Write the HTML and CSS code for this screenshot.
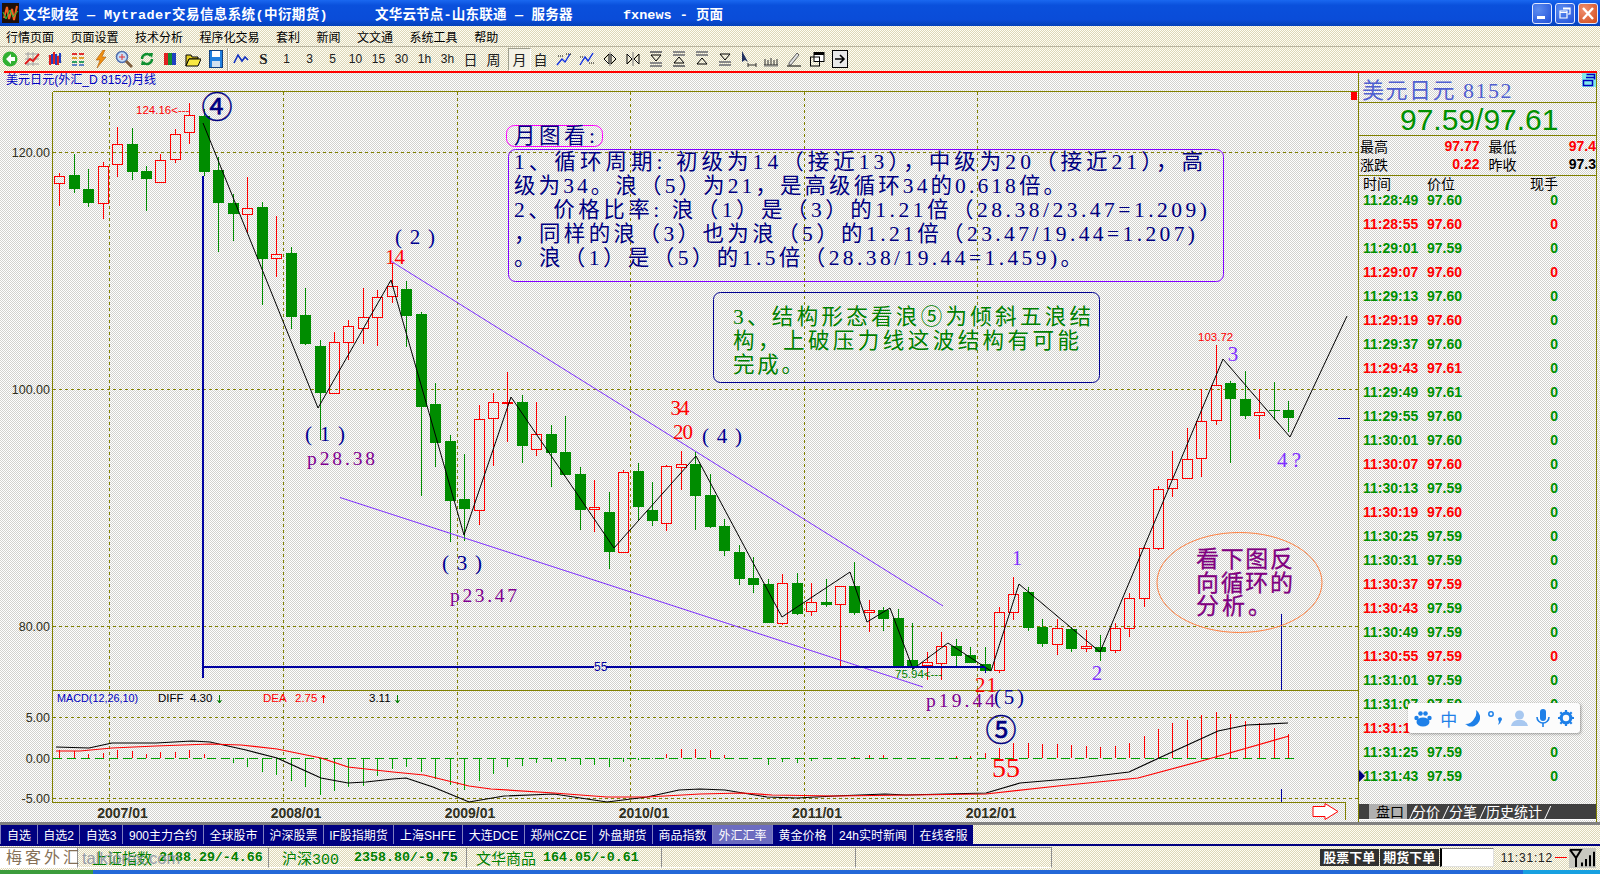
FILE: index.html
```html
<!DOCTYPE html>
<html>
<head>
  <meta charset="utf-8">
  <title>文华财经 Mytrader</title>
  <link rel="stylesheet" href="styles.css">
</head>
<body>
  <div class="window">
    <div class="titlebar">
      <svg class="app-icon" width="17" height="20" viewBox="0 0 17 20"><rect width="17" height="20" fill="#201008"/><path d="M2 15 5 4 7 16 10 6 12 17 15 3" fill="none" stroke="#f06020" stroke-width="2"/><path d="M1 9 4 16 8 7 11 14 16 8" fill="none" stroke="#20c040" stroke-width="1"/></svg>
      <span class="title-a">文华财经 — Mytrader交易信息系统(中衍期货)</span>
      <span class="title-b">文华云节点-山东联通 — 服务器</span>
      <span class="title-c">fxnews - 页面</span>
      <div class="winbtns">
        <div class="winbtn"><svg width="20" height="21" viewBox="0 0 20 21"><rect x="5" y="13" width="8" height="3" fill="#fff"/></svg></div>
        <div class="winbtn"><svg width="20" height="21" viewBox="0 0 20 21"><path d="M8 5h7v6h-2M5 8h7v7H5zM5 9.5h7M8 6h7" fill="none" stroke="#fff" stroke-width="1.2"/></svg></div>
        <div class="winbtn close"><svg width="20" height="21" viewBox="0 0 20 21"><path d="M5 5 15 16M15 5 5 16" stroke="#fff" stroke-width="2.4"/></svg></div>
      </div>
    </div>

    <div class="menubar">
      <span>行情页面</span><span>页面设置</span><span>技术分析</span><span>程序化交易</span><span>套利</span><span>新闻</span><span>文文通</span><span>系统工具</span><span>帮助</span>
    </div>

    <div class="toolbar">
      <div class="tb first"><svg width="16" height="16" viewBox="0 0 16 16"><circle cx="8" cy="8" r="7.5" fill="#30b030"/><path d="M9 3 4 8l5 5V10h4V6H9z" fill="#fff"/></svg></div>
      <div class="tb"><svg width="16" height="16" viewBox="0 0 16 16"><path d="M1 3h14M1 8h14M1 13h14M4 1v14M9 1v14" stroke="#a0a0a0"/><path d="M1 13 6 8l3 2 6-7" fill="none" stroke="#e02020" stroke-width="2"/></svg></div>
      <div class="tb"><svg width="16" height="16" viewBox="0 0 16 16"><path d="M1 5h14M1 11h14" stroke="#a0a0a0"/><path d="M3 4v10M7 1v12M11 5v9" stroke="#e02020" stroke-width="2"/><path d="M5 3v10M9 3v11M13 2v10" stroke="#2040c0" stroke-width="2"/></svg></div>
      <div class="tb"><svg width="16" height="16" viewBox="0 0 16 16"><path d="M2 3h5M9 3h5" stroke="#e03030" stroke-width="2"/><path d="M2 7h5M9 7h5" stroke="#e0a030" stroke-width="2"/><path d="M2 11h5M9 11h5" stroke="#30a060" stroke-width="2"/><path d="M2 14h5M9 14h5" stroke="#3060c0" stroke-width="1.4"/></svg></div>
      <div class="tb"><svg width="16" height="18" viewBox="0 0 16 18"><path d="M10 0 3 10h4l-3 8 9-11H9l3-7z" fill="#f09010" stroke="#a05000" stroke-width=".5"/></svg></div>
      <div class="tb"><svg width="18" height="18" viewBox="0 0 18 18"><circle cx="7" cy="7" r="5.5" fill="#c8e0f8" stroke="#5070b0" stroke-width="1.5"/><path d="M7 4v6M4 7h6" stroke="#e03030"/><path d="m11 11 6 6" stroke="#806040" stroke-width="3"/></svg></div>
      <div class="tb"><svg width="14" height="16" viewBox="0 0 14 16"><path d="M2 8a5 5 0 0 1 9-3M12 8a5 5 0 0 1-9 3" fill="none" stroke="#109030" stroke-width="2.4"/><path d="m9 2 4 0-1 5zM5 14l-4 0 1-5z" fill="#109030"/></svg></div>
      <div class="tb"><svg width="12" height="12" viewBox="0 0 12 12"><rect width="4" height="12" fill="#e02020"/><rect x="4" width="4" height="12" fill="#109030"/><rect x="8" width="4" height="12" fill="#2040c0"/></svg></div>
      <div class="tb"><svg width="16" height="15" viewBox="0 0 16 15"><path d="M1 3h5l1 2h6v2H4L1 14z" fill="#e8d020" stroke="#000"/><path d="M4 7h12l-3 7H1z" fill="#f8e840" stroke="#000"/></svg></div>
      <div class="tb"><svg width="14" height="18" viewBox="0 0 14 18"><rect x=".5" y=".5" width="13" height="17" fill="#2080e0" stroke="#104080"/><rect x="3" y="1" width="8" height="6" fill="#fff"/><rect x="3" y="11" width="8" height="6" fill="#d0e0f0"/></svg></div>
      <div class="tb-sep"></div>
      <div class="tb"><svg width="16" height="12" viewBox="0 0 16 12"><path d="m1 10 4-8 4 6 3-4 3 3" fill="none" stroke="#1030c0" stroke-width="1.6"/></svg></div>
      <div class="tb bold-s">S</div>
      <div class="tb">1</div><div class="tb">3</div><div class="tb">5</div><div class="tb">10</div><div class="tb">15</div><div class="tb">30</div><div class="tb">1h</div><div class="tb">3h</div>
      <div class="tb cjk">日</div><div class="tb cjk">周</div>
      <div class="tb cjk active">月</div><div class="tb cjk">自</div>
      <div class="tb"><svg width="16" height="16" viewBox="0 0 16 16"><path d="m1 14 5-6 3 3 5-8" fill="none" stroke="#1030e0" stroke-width="1.4"/><path d="M10 3h5M2 5h5" stroke="#000" stroke-dasharray="1 1"/></svg></div>
      <div class="tb"><svg width="16" height="16" viewBox="0 0 16 16"><path d="m1 14 5-8 3 4 5-8" fill="none" stroke="#1030e0" stroke-width="1.4"/><path d="M1 6h4M10 12h5" stroke="#000" stroke-dasharray="1 1"/></svg></div>
      <div class="tb"><svg width="14" height="14" viewBox="0 0 14 14"><path d="M6 2 1 7l5 5zM8 2l5 5-5 5z" fill="none" stroke="#000"/><path d="M7 0v14" stroke="#777"/></svg></div>
      <div class="tb"><svg width="14" height="14" viewBox="0 0 14 14"><path d="m1 2 5 5-5 5zM13 2 8 7l5 5z" fill="none" stroke="#000"/><path d="M7 0v14" stroke="#777"/></svg></div>
      <div class="tb"><svg width="16" height="16" viewBox="0 0 16 16"><path d="M2 1h12" stroke="#777" stroke-width="2"/><path d="M3 4h10l-5 6z" fill="none" stroke="#000"/><path d="M2 12h12M2 15h12" stroke="#888" stroke-width="2"/></svg></div>
      <div class="tb"><svg width="16" height="16" viewBox="0 0 16 16"><path d="M2 1h12M2 4h12" stroke="#888" stroke-width="2"/><path d="M3 12h10L8 6z" fill="none" stroke="#000"/><path d="M2 15h12" stroke="#777" stroke-width="2"/></svg></div>
      <div class="tb"><svg width="16" height="16" viewBox="0 0 16 16"><path d="M2 1h12M2 4h12" stroke="#888" stroke-width="2"/><path d="M3 13h10L8 7z" fill="none" stroke="#000"/></svg></div>
      <div class="tb"><svg width="16" height="16" viewBox="0 0 16 16"><path d="M3 3h10l-5 6z" fill="none" stroke="#000"/><path d="M2 11h12M2 14h12" stroke="#888" stroke-width="2"/></svg></div>
      <div class="tb"><svg width="18" height="18" viewBox="0 0 18 18"><path d="M3 1v11l3-2 3 2z" fill="#203060"/><path d="M9 15h8M9 13v4M17 13v4" stroke="#303030"/></svg></div>
      <div class="tb"><svg width="16" height="16" viewBox="0 0 16 16"><path d="M1 14h14M2 14V8M5 14V9M8 14V7M11 14V9M14 14V8" stroke="#303030"/><path d="M1 15h14" stroke="#808080"/></svg></div>
      <div class="tb"><svg width="16" height="16" viewBox="0 0 16 16"><path d="m3 12 8-10 2 2-8 10H3z" fill="#e0e0e0" stroke="#606060"/><path d="M1 15h14" stroke="#000"/></svg></div>
      <div class="tb"><svg width="16" height="16" viewBox="0 0 16 16"><rect x="5" y="1.500" width="10" height="9" fill="#fff" stroke="#000"/><rect x="1.500" y="6" width="9" height="9" fill="none" stroke="#000"/><path d="M5 3h10" stroke="#000" stroke-width="2"/></svg></div>
      <div class="tb"><svg width="16" height="18" viewBox="0 0 16 18"><rect x=".5" y=".5" width="15" height="17" fill="#e8e8e8" stroke="#000"/><path d="M3 9h8M8 5l4 4-4 4" fill="none" stroke="#000" stroke-width="1.6"/></svg></div>
    </div>

    <div class="redline"></div>

    <div class="main">
      <div class="chart">
        <svg class="chart-svg" width="1358" height="749" viewBox="0 73 1358 749">
          <text class="caption" x="6" y="83.500" textLength="150" lengthAdjust="spacingAndGlyphs">美元日元(外汇_D 8152)月线</text>

          <g class="grid">
            <path d="M53 152.500H1358M53 389.500H1358M53 626.500H1358M53 717.500H1358M53 798.500H1358"/>
            <path d="M109.500 92V802M283.500 92V802M457.500 92V802M630.500 92V802M804.500 92V802M977.500 92V802"/>
          </g>
          <g class="axis">
            <path d="M52.500 91.500H1358M52.500 91.500V802.500H1345M52 690.500H1358M1345.500 802V820"/>
          </g>
          <rect x="1351" y="92" width="6" height="8" fill="#ff0000"/>

          <g class="ylabels">
            <text x="50" y="157">120.00</text>
            <text x="50" y="394">100.00</text>
            <text x="50" y="631">80.00</text>
            <text x="50" y="722">5.00</text>
            <text x="50" y="763">0.00</text>
            <text x="50" y="803">-5.00</text>
          </g>

          <g id="histogram"></g>
          <path class="zero-green" d="M53 758.500H1296"/>
          <g id="candles"></g>

          <!-- 波浪连线 -->
          <polyline class="zigzag" points="203,123 318,408 391,280 464,535 511,397 614,548 696,456 782,617 850,572 867,622 890,608 913,669 948,643 991,671 1019,584 1100,652 1223,359 1290,437 1347,316"/>
          <path class="trend" d="M390 260.500 943 606M340 497.500 923 687"/>
          <path class="wave-blue" d="M203 176V678M203 667H594M606 667H985"/>
          <path class="thin-blue" d="M1281.500 614V690M1281.500 789V802M1338 418.500H1350M985.500 667V673"/>
          <polyline id="diff" class="line-black" points=""/>
          <polyline id="dea" class="line-red" points=""/>

          <!-- MACD 标题 -->
          <text class="macd-t blue" x="57" y="702" textLength="81" lengthAdjust="spacingAndGlyphs">MACD(12,26,10)</text>
          <text class="macd-t black" x="158" y="702">DIFF</text>
          <text class="macd-t black" x="190" y="702">4.30</text>
          <path d="M219.500 695v8m-2-3 2 3 2-3" fill="none" stroke="#008000"/>
          <text class="macd-t red" x="263" y="702">DEA</text>
          <text class="macd-t red" x="295" y="702">2.75</text>
          <path d="M323.500 703v-8m-2 3 2-3 2 3" fill="none" stroke="#ff0000"/>
          <text class="macd-t black" x="369" y="702">3.11</text>
          <path d="M397.500 695v8m-2-3 2 3 2-3" fill="none" stroke="#008000"/>

          <!-- 时间轴 -->
          <g class="dates">
            <text x="122.500" y="818">2007/01</text>
            <text x="296" y="818">2008/01</text>
            <text x="470" y="818">2009/01</text>
            <text x="644" y="818">2010/01</text>
            <text x="817" y="818">2011/01</text>
            <text x="991" y="818">2012/01</text>
          </g>
          <path class="next-arrow" d="M1313 806.500h12v-3l13 8-13 8v-3h-12z"/>

          <!-- 价格标注 -->
          <text class="price-note red" x="136" y="114">124.16&lt;---</text>
          <text class="price-note red" x="1198" y="341">103.72</text>
          <text class="price-note green" x="895" y="678">75.94&lt;---</text>
          <text class="big-55" x="594" y="671" id="n55">55</text>

          <!-- 标注文字 -->
          <text class="circled" x="217" y="118">④</text>
          <text class="circled" x="1001" y="741">⑤</text>
          <g class="wave-no navy">
            <text x="415" y="244" textLength="40">( 2 )</text>
            <text x="325" y="441" textLength="40">( 1 )</text>
            <text x="462" y="570" textLength="40">( 3 )</text>
            <text x="722" y="443" textLength="40">( 4 )</text>
            <text x="1009" y="704" textLength="30">( 5 )</text>
          </g>
          <g class="wave-no red">
            <text x="395" y="264" textLength="20">14</text>
            <text x="680" y="415" textLength="19">34</text>
            <text x="683" y="439" textLength="20">20</text>
            <text x="986" y="692" textLength="22">21</text>
          </g>
          <g class="wave-no violet">
            <text x="1017" y="565">1</text>
            <text x="1097" y="680">2</text>
            <text x="1233" y="361">3</text>
            <text x="1289" y="467" textLength="24">4?</text>
          </g>
          <g class="p-note">
            <text x="307" y="465" textLength="68">p28.38</text>
            <text x="450" y="602" textLength="67">p23.47</text>
            <text x="926" y="707" textLength="69">p19.44</text>
          </g>
          <text class="big-red" x="992" y="777" textLength="28">55</text>

          <rect class="box-month" x="506.500" y="125.500" width="96" height="21" rx="8"/>
          <text class="note navy" x="514" y="143" textLength="81">月图看:</text>

          <rect class="box-main" x="508.500" y="149.500" width="715" height="132" rx="7"/>
          <g class="note navy">
            <text x="514" y="169" textLength="689">1、循环周期: 初级为14（接近13），中级为20（接近21），高</text>
            <text x="514" y="193" textLength="551">级为34。浪（5）为21，是高级循环34的0.618倍。</text>
            <text x="514" y="216.500" textLength="693">2、价格比率: 浪（1）是（3）的1.21倍（28.38/23.47=1.209)</text>
            <text x="514" y="241" textLength="681">，同样的浪（3）也为浪（5）的1.21倍（23.47/19.44=1.207)</text>
            <text x="514" y="265" textLength="568">。浪（1）是（5）的1.5倍（28.38/19.44=1.459)。</text>
          </g>

          <rect class="box-green" x="713.500" y="292.500" width="386" height="90" rx="7"/>
          <g class="note green">
            <text x="733" y="324" textLength="358">3、结构形态看浪⑤为倾斜五浪结</text>
            <text x="733" y="348" textLength="346">构，上破压力线这波结构有可能</text>
            <text x="733" y="372" textLength="70">完成。</text>
          </g>

          <ellipse class="oval" cx="1239.500" cy="582.500" rx="82.500" ry="50"/>
          <g class="note purple">
            <text x="1196" y="567" textLength="97">看下图反</text>
            <text x="1196" y="591" textLength="97">向循环的</text>
            <text x="1196" y="614" textLength="75">分析。</text>
          </g>
        </svg>
      </div>

      <div class="side">
        <div class="side-head">
          <span class="symbol">美元日元 8152</span>
          <svg class="layout-icon" width="14" height="14" viewBox="0 0 14 14"><rect width="14" height="14" fill="#80e8e8"/><path d="M4.500 1.500h8v5M1.500 7.500h9v5h-9zM4 4.500h8" fill="none" stroke="#0000c0" stroke-width="1.500"/></svg>
        </div>
        <div class="side-price">97.59/97.61</div>
        <div class="side-stats">
          <div class="stat-row"><span class="s-label">最高</span><span class="s-val up">97.77</span><span class="s-label2">最低</span><span class="s-val2 up">97.4</span></div>
          <div class="stat-row"><span class="s-label">涨跌</span><span class="s-val up">0.22</span><span class="s-label2">昨收</span><span class="s-val2">97.3</span></div>
        </div>
        <div class="tick-head"><span class="c-time">时间</span><span class="c-price">价位</span><span class="c-qty">现手</span></div>
        <div class="ticks">
          <div class="tick dn"><span class="c-time">11:28:49</span><span class="c-price">97.60</span><span class="c-qty">0</span></div>
          <div class="tick up"><span class="c-time">11:28:55</span><span class="c-price">97.60</span><span class="c-qty">0</span></div>
          <div class="tick dn"><span class="c-time">11:29:01</span><span class="c-price">97.59</span><span class="c-qty">0</span></div>
          <div class="tick up"><span class="c-time">11:29:07</span><span class="c-price">97.60</span><span class="c-qty">0</span></div>
          <div class="tick dn"><span class="c-time">11:29:13</span><span class="c-price">97.60</span><span class="c-qty">0</span></div>
          <div class="tick up"><span class="c-time">11:29:19</span><span class="c-price">97.60</span><span class="c-qty dn">0</span></div>
          <div class="tick dn"><span class="c-time">11:29:37</span><span class="c-price">97.60</span><span class="c-qty">0</span></div>
          <div class="tick up"><span class="c-time">11:29:43</span><span class="c-price">97.61</span><span class="c-qty dn">0</span></div>
          <div class="tick dn"><span class="c-time">11:29:49</span><span class="c-price">97.61</span><span class="c-qty">0</span></div>
          <div class="tick dn"><span class="c-time">11:29:55</span><span class="c-price">97.60</span><span class="c-qty">0</span></div>
          <div class="tick dn"><span class="c-time">11:30:01</span><span class="c-price">97.60</span><span class="c-qty">0</span></div>
          <div class="tick up"><span class="c-time">11:30:07</span><span class="c-price">97.60</span><span class="c-qty dn">0</span></div>
          <div class="tick dn"><span class="c-time">11:30:13</span><span class="c-price">97.59</span><span class="c-qty">0</span></div>
          <div class="tick up"><span class="c-time">11:30:19</span><span class="c-price">97.60</span><span class="c-qty dn">0</span></div>
          <div class="tick dn"><span class="c-time">11:30:25</span><span class="c-price">97.59</span><span class="c-qty">0</span></div>
          <div class="tick dn"><span class="c-time">11:30:31</span><span class="c-price">97.59</span><span class="c-qty">0</span></div>
          <div class="tick up"><span class="c-time">11:30:37</span><span class="c-price">97.59</span><span class="c-qty dn">0</span></div>
          <div class="tick up"><span class="c-time">11:30:43</span><span class="c-price dn">97.59</span><span class="c-qty dn">0</span></div>
          <div class="tick dn"><span class="c-time">11:30:49</span><span class="c-price">97.59</span><span class="c-qty">0</span></div>
          <div class="tick up"><span class="c-time">11:30:55</span><span class="c-price">97.59</span><span class="c-qty">0</span></div>
          <div class="tick dn"><span class="c-time">11:31:01</span><span class="c-price">97.59</span><span class="c-qty">0</span></div>
          <div class="tick dn"><span class="c-time">11:31:07</span><span class="c-price">97.59</span><span class="c-qty">0</span></div>
          <div class="tick up"><span class="c-time">11:31:19</span><span class="c-price">97.59</span><span class="c-qty">0</span></div>
          <div class="tick dn"><span class="c-time">11:31:25</span><span class="c-price">97.59</span><span class="c-qty">0</span></div>
          <div class="tick dn"><span class="c-time">11:31:43</span><span class="c-price">97.59</span><span class="c-qty">0</span></div>
        </div>
        <div class="side-tabs">
          <span class="st-active">盘口</span><span>分价</span><span>分笔</span><span>历史统计</span>
        </div>
        <div class="cur-mark"></div>
        <div class="ime">
          <svg width="18" height="17" viewBox="0 0 18 17"><ellipse cx="9" cy="12" rx="6.500" ry="4.500"/><circle cx="2.500" cy="8" r="2.200"/><circle cx="6.500" cy="3.500" r="2.300"/><circle cx="11.500" cy="3.500" r="2.300"/><circle cx="15.500" cy="8" r="2.200"/></svg>
          <span class="ime-zh">中</span>
          <svg width="15" height="17" viewBox="0 0 15 17"><path d="M11 0A9 9 0 0 1 3 16 6 6 0 0 0 0 14 10 10 0 0 0 9 9 10 10 0 0 0 11 0"/></svg>
          <svg width="14" height="14" viewBox="0 0 14 14"><circle cx="3" cy="3" r="2.200" fill="none" stroke="#1e80e8" stroke-width="1.500"/><path d="M10 8a2 2 0 1 1 3 2q0 2-3 4l1-3z"/></svg>
          <svg class="ime-dim" width="17" height="16" viewBox="0 0 17 16"><circle cx="8.500" cy="5" r="4.500"/><path d="M0 16q1-5 6-6h5q5 1 6 6z"/></svg>
          <svg width="14" height="18" viewBox="0 0 14 18"><rect x="4" width="6" height="12" rx="3"/><path d="M1 8a6 6 0 0 0 12 0" fill="none" stroke="#1e80e8" stroke-width="1.600"/><path d="M7 14v4" stroke="#1e80e8" stroke-width="1.600"/></svg>
          <svg width="16" height="16" viewBox="0 0 16 16"><circle cx="8" cy="8" r="4.800" fill="none" stroke="#1e80e8" stroke-width="3.200"/><path d="M8 0v3M8 13v3M0 8h3M13 8h3M2.300 2.300l2 2M11.700 11.700l2 2M2.300 13.700l2-2M11.700 4.300l2-2" stroke="#1e80e8" stroke-width="2.200"/></svg>
        </div>
      </div>
    </div>

    <div class="sep"></div>

    <div class="tabs">
      <span style="width:37px">自选</span><span style="width:42px">自选2</span><span style="width:43px">自选3</span><span style="width:81px">900主力合约</span><span style="width:60px">全球股市</span><span style="width:60px">沪深股票</span><span style="width:70px">IF股指期货</span><span style="width:69px">上海SHFE</span><span style="width:62px">大连DCE</span><span style="width:68px">郑州CZCE</span><span style="width:60px">外盘期货</span><span style="width:60px">商品指数</span><span class="tab-on" style="width:60px">外汇汇率</span><span style="width:60px">黄金价格</span><span style="width:81px">24h实时新闻</span><span style="width:60px">在线客服</span>
    </div>

    <div class="status">
      <div class="st-box st-logo"></div>
      <div class="st-box st-1"><span class="st-name">上证指数</span><span class="st-num">2188.29/-4.66</span></div>
      <div class="st-box st-2"><span class="st-name st-short">沪深300</span><span class="st-num">2358.80/-9.75</span></div>
      <div class="st-box st-3"><span class="st-name">文华商品</span><span class="st-num">164.05/-0.61</span></div>
      <div class="st-box st-4"></div>
      <div class="st-box st-5"></div>
      <div class="st-right">
        <span class="order">股票下单</span><span class="order">期货下单</span>
        <span class="order-input"></span>
        <span class="clock">11:31:12</span>
        <span class="clock-dash"></span>
        <svg class="signal" width="27" height="20" viewBox="0 0 27 22" preserveAspectRatio="none"><rect width="27" height="22" fill="#c8c8c0"/><path d="M1 2h11L7 11V21M1 2l6 9" fill="none" stroke="#000" stroke-width="2"/><path d="M13 20v-4M17 20v-8M21 20v-12M25 20V4" stroke="#000" stroke-width="2"/></svg>
      </div>
      <div class="watermark"><span class="wm-cn">梅客外汇</span><span class="wm-en">talkforex.com</span></div>
    </div>

    <div class="taskbar"><div class="start"></div><div class="tray"></div></div>
  </div>
  <script src="chart.js"></script>
</body>
</html>
```

FILE: styles.css
```css
:root {
  --cream: conic-gradient(#dcd6b8 25%, #fffef4 0 50%, #dcd6b8 0 75%, #fffef4 0) 0 0 / 2px 2px;
  --paper: conic-gradient(#d2d2ce 25%, #ffffff 0 50%, #d2d2ce 0 75%, #ffffff 0) 0 0 / 2px 2px;
  --serif: "Liberation Serif", "Noto Sans CJK SC", serif;
  --cjk: "Liberation Sans", "Noto Sans CJK SC", sans-serif;
  --mono: "Liberation Mono", "Noto Sans CJK SC", monospace;
  --up: #ff0000;
  --down: #009000;
}
* { box-sizing: border-box; }
body {
  margin: 0;
  font-family: var(--cjk);
  font-size: 12px;
  overflow: hidden;
}
.window {
  width: 1600px;
  height: 874px;
  display: flex;
  flex-direction: column;
  overflow: hidden;
  background: var(--cream);
}
.window > * { flex: none; }

/* title bar */
.titlebar {
  height: 26px;
  display: flex;
  align-items: center;
  color: #fff;
  font-family: var(--mono);
  font-weight: 700;
  font-size: 13.500px;
  white-space: nowrap;
  background: linear-gradient(#1a68f0, #0a50dc 20%, #0a4cd8 75%, #0440b8);
}
.app-icon { margin-left: 2px; }
.title-a { margin-left: 4px; width: 352px; letter-spacing: .4px; }
.title-b { width: 248px; letter-spacing: .2px; }
.title-c { width: 100px; }
.winbtns { margin-left: auto; margin-right: 2px; display: flex; gap: 3px; }
.winbtn {
  width: 20px;
  height: 21px;
  border: 1px solid #e0e8ff;
  border-radius: 3px;
  background: radial-gradient(circle at 30% 30%, #5c8cf0, #2050d8);
}
.winbtn svg { display: block; margin: -1px; }
.winbtn.close { background: radial-gradient(circle at 30% 30%, #f09070, #d04818); }

/* menu and tools */
.menubar {
  height: 20px;
  display: flex;
  align-items: center;
  gap: 16.500px;
  padding-left: 6px;
  color: #000;
  font-size: 12px;
}
.toolbar {
  height: 25px;
  display: flex;
  align-items: center;
  border-top: 1px solid #b8b4a0;
  font-family: "Liberation Sans", sans-serif;
  font-size: 12px;
  color: #202020;
}
.tb {
  flex: none;
  width: 23px;
  height: 23px;
  display: flex;
  align-items: center;
  justify-content: center;
}
.tb.first { width: 20px; }
.tb.cjk { font-family: var(--cjk); font-size: 14px; }
.tb.bold-s { font-family: "Liberation Serif", serif; font-size: 15px; font-weight: 700; }
.tb.active {
  margin-left: 3px;
  width: 23px;
  margin-right: -2px;
  border: 1px solid #fff;
  border-left-color: #a0a090;
  border-top-color: #a0a090;
  background: #f4f2e6;
}
.tb-sep { width: 2px; height: 23px; border-left: 1px solid #a8a490; border-right: 1px solid #fff; }
.redline {
  height: 2px;
  margin-left: 4px;
  margin-right: 3px;
  background: #ff0000;
}

/* chart */
.main {
  height: 749px;
  display: flex;
  background: var(--paper);
  position: relative;
}
.chart { width: 1358px; flex: none; }
.chart-svg { display: block; overflow: hidden; }
.caption { font-family: var(--cjk); font-size: 12px; fill: #0000c0; }
.grid path { fill: none; stroke: #808000; stroke-dasharray: 3 3; shape-rendering: crispEdges; }
.axis path { fill: none; stroke: #808000; shape-rendering: crispEdges; }
.ylabels text { font-family: "Liberation Sans", sans-serif; font-size: 12.500px; fill: #303020; text-anchor: end; }
.zero-green { stroke: #00a000; stroke-width: 1; stroke-dasharray: 9 5; shape-rendering: crispEdges; }
.zigzag { fill: none; stroke: #000; stroke-width: 1; }
.trend { fill: none; stroke: #8030ff; stroke-width: 1; }
.wave-blue { fill: none; stroke: #0000a0; stroke-width: 2; shape-rendering: crispEdges; }
.thin-blue { fill: none; stroke: #0000a0; stroke-width: 1; shape-rendering: crispEdges; }
.line-black { fill: none; stroke: #000; stroke-width: 1.200; }
.line-red { fill: none; stroke: #ff0000; stroke-width: 1.200; }
.macd-t { font-family: "Liberation Sans", sans-serif; font-size: 11.500px; }
.macd-t.blue { fill: #0000c0; }
.macd-t.black { fill: #000; }
.macd-t.red { fill: #ff0000; }
.dates text {
  font-family: "Liberation Sans", sans-serif;
  font-size: 14px;
  font-weight: 700;
  fill: #303020;
  text-anchor: middle;
}
.next-arrow { fill: #fff; stroke: #ff0000; stroke-width: 1; }
.price-note { font-family: "Liberation Sans", sans-serif; font-size: 11.500px; }
.price-note.red { fill: #ff0000; }
.price-note.green { fill: #008000; }
.big-55 { font-family: "Liberation Sans", sans-serif; font-size: 12px; fill: #0000a0; }
.circled {
  font-family: "Noto Sans CJK SC", sans-serif;
  font-size: 31px;
  fill: #000080;
  stroke: #000080;
  stroke-width: .5;
  text-anchor: middle;
}
.wave-no text { font-family: var(--serif); font-size: 21px; text-anchor: middle; }
.wave-no.navy text { fill: #000090; }
.wave-no.red text { fill: #ff0000; }
.wave-no.violet text { fill: #8030ff; }
.p-note text { font-family: var(--serif); font-size: 19.500px; fill: #800090; }
.big-red { font-family: var(--serif); font-size: 28px; fill: #ff0000; }
.note text, text.note { font-family: var(--serif); font-size: 21.500px; }
.note.navy, .note.navy text { fill: #000080; }
.note.green text { fill: #008000; }
.note.purple text { fill: #800080; font-size: 23px; stroke: #800080; stroke-width: .3; }
.box-month { fill: none; stroke: #ff00ff; }
.box-main { fill: none; stroke: #8000ff; }
.box-green { fill: none; stroke: #000090; }
.oval { fill: none; stroke: #ff8040; }

/* quote panel */
.side {
  width: 239px;
  flex: none;
  position: relative;
  display: flex;
  flex-direction: column;
  overflow: hidden;
  border-left: 1px solid #808000;
  border-right: 1px solid #808000;
}
.side-head { height: 29px; display: flex; align-items: center; padding-left: 3px; }
.symbol {
  font-family: var(--serif);
  font-size: 22px;
  letter-spacing: 1.500px;
  color: #5060d0;
  white-space: nowrap;
}
.layout-icon { position: absolute; top: 0; right: 0; }
.side-price {
  height: 34px;
  border-top: 1px solid #808000;
  border-bottom: 1px solid #808000;
  padding-left: 41px;
  line-height: 33px;
  font-size: 30px;
  color: var(--down);
}
.side-stats { height: 40px; border-bottom: 1px solid #808000; padding-top: 1px; }
.stat-row { height: 18px; display: flex; align-items: center; font-size: 14px; white-space: nowrap; }
.s-label { width: 33px; padding-left: 1px; }
.s-val { width: 90px; text-align: right; font-weight: 700; }
.s-label2 { width: 48px; padding-left: 9px; }
.s-val2 { margin-left: 42px; font-weight: 700; }
.up { color: var(--up); }
.tick-head { height: 16px; display: flex; align-items: center; font-size: 14px; padding-bottom: 3px; }
.c-time { width: 68px; padding-left: 4px; flex: none; }
.c-price { width: 87px; flex: none; }
.c-qty { width: 44px; flex: none; }
.tick-head .c-qty { text-align: left; padding-left: 17px; width: 70px; margin-left: -1px; }
.ticks { display: flex; flex-direction: column; margin-top: -4px; }
.tick { height: 24px; flex: none; display: flex; align-items: center; font-size: 14px; font-weight: 700; }
.tick.dn { color: var(--down); }
.tick.up { color: var(--up); }
.tick .c-price.dn, .tick .c-qty.dn { color: var(--down); }
.tick .c-qty { text-align: right; width: 45px; padding-right: 1px; }
.cur-mark {
  position: absolute;
  left: 0;
  top: 697px;
  border-left: 6px solid #000080;
  border-top: 6px solid transparent;
  border-bottom: 6px solid transparent;
}
.side-tabs {
  position: absolute;
  left: 0;
  right: 0;
  top: 731px;
  height: 16px;
  background: #404040;
  color: #fff;
  display: flex;
  font-size: 14px;
  line-height: 16px;
  padding-left: 10px;
  border-bottom: 1px solid #fff;
}
.side-tabs span { flex: none; margin-right: 9px; position: relative; }
.side-tabs span::after {
  content: "";
  position: absolute;
  top: 2px;
  right: -6px;
  width: 1px;
  height: 14px;
  background: #fff;
  transform: skewX(-25deg);
}
.side-tabs .st-active { background: #b0b0b0; color: #000; padding: 0 3px 0 7px; margin-right: 5px; }
.ime {
  position: absolute;
  left: 49px;
  top: 630px;
  width: 172px;
  height: 30px;
  background: #fcfcfc;
  border-radius: 3px;
  box-shadow: 1px 1px 3px rgba(0, 0, 0, .35);
  display: flex;
  align-items: center;
  justify-content: space-between;
  padding: 0 6px;
}
.ime svg { fill: #1e80e8; }
.ime svg.ime-dim { fill: #a8c8f0; }
.ime-zh { color: #1e80e8; font-size: 17px; }

/* bottom bars */
.sep { height: 3px; background: #808080; }
.tabs {
  height: 21px;
  display: flex;
  border-bottom: 2px solid #000080;
  color: #fff;
  font-size: 12px;
}
.tabs span {
  flex: none;
  background: #000080;
  border-left: 1px solid #8080c0;
  display: flex;
  align-items: center;
  justify-content: center;
  white-space: nowrap;
}
.tabs .tab-on { background: #6c6cc0; }
.status {
  height: 24px;
  display: flex;
  align-items: stretch;
  padding: 1px 0 2px;
  position: relative;
  overflow: hidden;
  color: #008000;
}
.st-box {
  flex: none;
  border-top: 1px solid #909090;
  border-right: 1px solid #909090;
  border-bottom: 1px solid #fff;
  display: flex;
  align-items: center;
  white-space: nowrap;
}
.st-logo { width: 78px; background: #fff; }
.st-1 { width: 191px; padding-left: 14px; }
.st-2 { width: 198px; padding-left: 13px; }
.st-3 { width: 195px; padding-left: 9px; }
.st-4 { width: 194px; }
.st-5 { width: 196px; }
.st-name { font-size: 15px; width: 67px; flex: none; }
.st-name.st-short { font-family: var(--mono); width: 72px; }
.st-num { font-family: "Liberation Mono", monospace; font-weight: 700; font-size: 13.300px; }
.st-right {
  margin-left: auto;
  display: flex;
  align-items: center;
  padding-right: 4px;
}
.order {
  width: 59px;
  height: 17px;
  margin-right: 1px;
  background: #303030;
  color: #fff;
  font-size: 13px;
  font-weight: 700;
  line-height: 17px;
  text-align: center;
}
.order-input {
  width: 54px;
  height: 19px;
  background: #fff;
  border: 1px solid;
  border-color: #808080 #e0e0e0 #e0e0e0 #808080;
  border-left: 2px solid #000;
}
.clock { margin-left: 7px; color: #202020; font-size: 12px; letter-spacing: .8px; }
.clock-dash { width: 12px; height: 1px; background: #ff0000; margin: 0 2px; }
.signal { display: block; }
.watermark {
  position: absolute;
  left: 6px;
  top: 2px;
  height: 20px;
  line-height: 20px;
  display: flex;
  align-items: center;
  white-space: nowrap;
}
.wm-cn { font-family: var(--serif); font-size: 16px; line-height: 20px; color: #70583a; letter-spacing: 3px; opacity: .85; }
.wm-en { font-size: 16.500px; line-height: 20px; color: #8890a0; opacity: .85; }
.taskbar {
  height: 4px;
  display: flex;
  justify-content: space-between;
  background: #2468d8;
}
.start { width: 93px; background: #3c9c3c; }
.tray { width: 77px; background: #18a0e0; }
```

FILE: chart.js
```js
// 月线数据: [颜色, 实体上, 实体下, 最高, 最低], 单位是图上的像素
const candles = [
  ['r',176,183,173,206],['g',175,189,154,193],['g',189,203,169,207],['r',166,203,162,219],
  ['r',144,164,127,177],['g',144,172,128,180],['g',171,179,166,211],['r',160,182,154,183],
  ['r',134,159,129,163],['r',115,132,103,144],['g',116,172,109,176],['g',170,203,157,252],
  ['g',203,214,194,241],['r',208,214,177,233],['g',207,259,202,305],['r',254,258,216,277],
  ['g',253,317,247,329],['g',315,344,288,345],['g',346,393,340,440],['r',342,393,332,393],
  ['r',326,342,320,360],['r',317,328,288,344],['r',297,317,290,346],['r',286,296,263,303],
  ['g',289,316,281,347],['g',314,407,312,496],['g',404,443,383,467],['g',441,501,435,542],
  ['g',499,509,454,541],['r',419,510,405,525],['r',402,418,393,466],['r',402,403,372,442],
  ['g',402,446,395,463],['r',434,449,402,456],['g',434,453,425,487],['g',452,475,416,475],
  ['g',474,510,467,530],['r',507,509,480,532],['g',512,552,492,569],['r',472,552,470,553],
  ['g',471,507,463,520],['g',510,521,482,526],['r',466,523,465,531],['r',464,467,451,490],
  ['g',464,496,452,530],['g',495,527,474,528],['g',526,551,519,556],['g',552,579,545,585],
  ['g',578,585,557,593],['g',584,623,579,623],['r',583,623,574,625],['g',583,614,573,615],
  ['r',602,611,583,616],['g',602,605,579,607],['r',586,604,586,668],['g',586,613,562,615],
  ['r',610,612,600,632],['g',610,619,607,631],['g',618,667,609,667],['g',660,668,623,670],
  ['r',662,665,652,680],['r',646,663,632,680],['g',646,656,639,666],['g',655,663,647,663],
  ['g',664,671,647,672],['r',612,670,607,673],['r',594,612,577,620],['g',592,628,587,631],
  ['g',627,644,619,647],['r',628,644,619,655],['g',629,649,627,652],['r',646,648,630,652],
  ['g',647,652,635,661],['r',628,650,623,653],['r',598,628,593,637],['r',548,598,547,607],
  ['r',489,548,486,550],['r',479,488,451,497],['r',459,478,428,479],['r',421,458,389,477],
  ['r',385,420,345,425],['g',383,399,381,463],['g',399,416,371,419],['r',412,415,389,439],
  ['g',410,411,382,420],['g',410,418,401,432]
];

// MACD 柱, 每根对应一根K线, 正红负绿
const bars = [8,7,4,5,8,7,4,6,6,8,4,0,-5,-9,-14,-17,-23,-29,-37,-33,-29,-28,-18,-11,-9,-14,-21,-27,-32,-23,-16,-9,-8,-5,-4,-3,-7,-7,-9,-4,-2,-1,4,9,9,8,3,0,0,-7,-4,-5,-3,0,0,1,3,3,0,0,0,0,2,2,5,10,15,15,14,14,13,12,11,12,15,22,29,35,38,43,46,44,37,35,30,24];

const diff = [[56,747],[89,748],[112,743],[156,743],[192,741],[210,742],[246,750],[277,758],[321,778],[348,783],[366,782],[393,779],[406,778],[433,787],[469,802],[504,796],[554,794],[607,802],[647,797],[679,790],[700,789],[725,790],[767,797],[797,798],[835,796],[885,794],[906,795],[986,793],[1020,783],[1079,778],[1129,772],[1159,758],[1218,731],[1247,725],[1288,723]];
const dea = [[56,751],[80,751],[112,748],[156,746],[210,744],[241,745],[277,749],[321,758],[348,767],[393,772],[424,775],[469,786],[491,789],[554,793],[607,797],[647,797],[700,794],[742,793],[772,795],[835,796],[986,794],[1058,786],[1138,778],[1205,760],[1289,736]];

const NS = 'http://www.w3.org/2000/svg';
const RED = '#ff0000';
const GREEN = '#008c00';

function add(parent, tag, attrs) {
  const el = document.createElementNS(NS, tag);
  for (const k in attrs) el.setAttribute(k, attrs[k]);
  el.setAttribute('shape-rendering', 'crispEdges');
  parent.appendChild(el);
}

function barX(i) {
  return Math.round(59.3 + 14.457 * i);
}

const candleGroup = document.getElementById('candles');
candles.forEach(function(c, i) {
  const x = barX(i) + 0.5;
  const color = c[0] === 'r' ? RED : GREEN;
  if (c[3] < c[1]) add(candleGroup, 'line', { x1: x, x2: x, y1: c[3], y2: c[1], stroke: color });
  if (c[4] > c[2]) add(candleGroup, 'line', { x1: x, x2: x, y1: c[2], y2: c[4], stroke: color });
  const h = Math.max(c[2] - c[1], 1);
  if (c[0] === 'r') {
    add(candleGroup, 'rect', { x: x - 5, y: c[1] + 0.5, width: 10, height: h, fill: 'none', stroke: RED });
  } else {
    add(candleGroup, 'rect', { x: x - 5.5, y: c[1], width: 11, height: h, fill: GREEN });
  }
});

const histGroup = document.getElementById('histogram');
bars.forEach(function(v, i) {
  if (v === 0) return;
  const x = barX(i) + 0.5;
  add(histGroup, 'line', { x1: x, x2: x, y1: 758, y2: 758 - v, stroke: v > 0 ? RED : '#00a000' });
});

document.getElementById('diff').setAttribute('points', diff.join(' '));
document.getElementById('dea').setAttribute('points', dea.join(' '));
```
